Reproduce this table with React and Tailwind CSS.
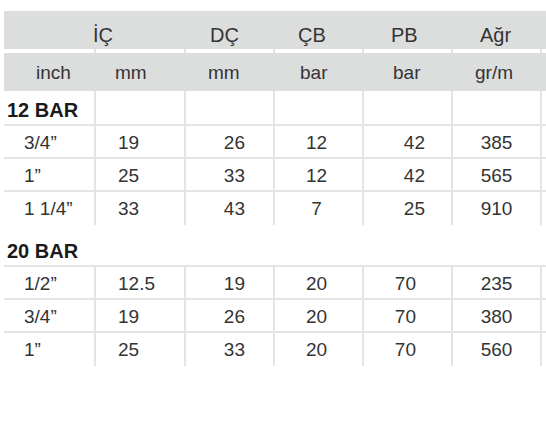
const cols = "grid grid-cols-[90px_90px_89px_89px_89px_89px_1fr]";
const line = "border-[#e4e4e4]";

const sections = [
  {
    title: "12 BAR",
    pbPad: "pr-[26px]",
    rows: [
      ["3/4”", "19", "26", "12", "42", "385"],
      ["1”", "25", "33", "12", "42", "565"],
      ["1 1/4”", "33", "43", "7", "25", "910"],
    ],
  },
  {
    title: "20 BAR",
    pbPad: "pr-[35px]",
    rows: [
      ["1/2”", "12.5", "19", "20", "70", "235"],
      ["3/4”", "19", "26", "20", "70", "380"],
      ["1”", "25", "33", "20", "70", "560"],
    ],
  },
];

function Dividers({ height }) {
  return (
    <div className={cols}>
      <div className={height} />
      {[0, 1, 2, 3, 4, 5].map((i) => (
        <div key={i} className={`${height} border-l-2 ${line}`} />
      ))}
    </div>
  );
}

function DataRow({ row, last, pbPad }) {
  const h = last ? "h-[35px]" : "h-[33px]";
  const cell = `${h} border-t-2 ${line} pt-[6px] leading-[22px]`;
  return (
    <div className={cols}>
      <div className={`${cell} pl-[20px]`}>{row[0]}</div>
      <div className={`${cell} border-l-2 pl-[22px]`}>{row[1]}</div>
      <div className={`${cell} border-l-2 pr-[28px] text-right`}>{row[2]}</div>
      <div className={`${cell} border-l-2 pr-[4px] text-center`}>{row[3]}</div>
      <div className={`${cell} border-l-2 ${pbPad} text-right`}>{row[4]}</div>
      <div className={`${cell} border-l-2 text-center`}>{row[5]}</div>
      <div className={`${cell} border-l-2`} />
    </div>
  );
}

export default function App() {
  return (
    <div
      className="w-[546px] h-[445px] bg-white pl-[4px] pt-[11px] text-[#343434] text-[19px] overflow-hidden"
      style={{ fontFamily: '"Liberation Sans", Arial, sans-serif' }}
    >
      <div className="w-[542px]">
        <div className={`${cols} h-[38px] bg-[#dcdddd] text-[20px] leading-[22px] pt-[13px]`}>
          <div />
          <div className="-ml-[1px]">İÇ</div>
          <div className="pl-[26px]">DÇ</div>
          <div className="pl-[25px]">ÇB</div>
          <div className="pl-[29px]">PB</div>
          <div className="pl-[29px]">Ağr</div>
          <div />
        </div>
        <Dividers height="h-[4px]" />
        <div className={`${cols} h-[38px] bg-[#dcdddd] leading-[22px] pt-[9px]`}>
          <div className="pl-[32px]">inch</div>
          <div className="pl-[21px]">mm</div>
          <div className="pl-[24px]">mm</div>
          <div className="pl-[27px]">bar</div>
          <div className="pl-[31px]">bar</div>
          <div className="pl-[24px]">gr/m</div>
          <div />
        </div>

        {sections.map((s, si) => (
          <div key={s.title}>
            {si === 0 ? (
              <div className={cols}>
                <div className="h-[33px] pl-[3px] pt-[8px] text-[20px] leading-[22px] font-bold text-[#1a1a1a]">
                  {s.title}
                </div>
                {[0, 1, 2, 3, 4, 5].map((i) => (
                  <div key={i} className={`h-[33px] border-l-2 ${line}`} />
                ))}
              </div>
            ) : (
              <div className="h-[40px] pl-[3px] pt-[15px] text-[20px] leading-[22px] font-bold text-[#1a1a1a]">
                {s.title}
              </div>
            )}
            {s.rows.map((r, i) => (
              <DataRow
                key={i}
                row={r}
                last={i === s.rows.length - 1}
                pbPad={s.pbPad}
              />
            ))}
          </div>
        ))}
      </div>
    </div>
  );
}
